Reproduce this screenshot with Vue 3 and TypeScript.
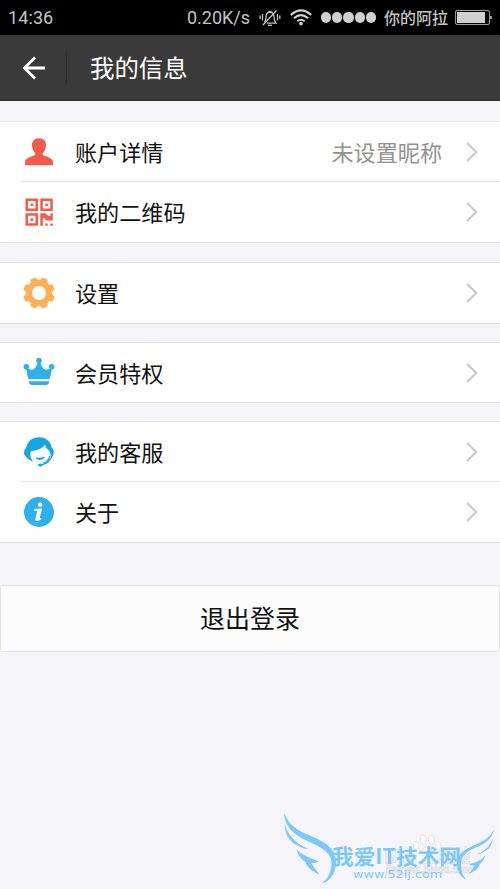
<script setup lang="ts">
type IconName = 'user' | 'qr' | 'gear' | 'crown' | 'service' | 'info'

interface Item {
  icon: IconName
  label: string
  value?: string
}

const groups: Item[][] = [
  [
    { icon: 'user', label: '账户详情', value: '未设置昵称' },
    { icon: 'qr', label: '我的二维码' },
  ],
  [{ icon: 'gear', label: '设置' }],
  [{ icon: 'crown', label: '会员特权' }],
  [
    { icon: 'service', label: '我的客服' },
    { icon: 'info', label: '关于' },
  ],
]

const teeth = [22.5, 67.5, 112.5, 157.5, 202.5, 247.5, 292.5, 337.5]
</script>

<template>
  <div class="screen">
    <div class="status">
      <span class="time">14:36</span>
      <span class="speed">0.20K/s</span>
      <svg class="bell" viewBox="0 0 22 18" fill="none" stroke="#c4c4c4" stroke-width="1.3">
        <path d="M5.5 13.5 Q7 11.500 7 8 Q7 3.500 11 3 Q15 3.500 15 8 Q15 11.500 17 14.200 H8" />
        <path d="M9.500 2.300 H12.500 M9 16.300 H13" />
        <path d="M4 16 L17.500 1.500" />
        <path d="M3.500 5 V11.500 M1.200 6.500 V10 M18.500 5 V11.500 M20.800 6.500 V10" />
      </svg>
      <svg class="wifi" viewBox="0 0 22 17" fill="none" stroke="#d0d0d0" stroke-width="2.100">
        <path d="M0.800 5.900 Q11 -3.300 21.200 5.900" />
        <path d="M4 9.200 Q11 3 18 9.200" />
        <path d="M7.300 12.300 Q11 9.200 14.700 12.300" />
        <circle cx="11" cy="14.600" r="1.900" fill="#d0d0d0" stroke="none" />
      </svg>
      <div class="signal"><i v-for="n in 5" :key="n"></i></div>
      <span class="carrier">你的阿拉</span>
      <div class="battery"><i></i></div>
    </div>

    <header class="header">
      <svg class="back" viewBox="0 0 24 24" fill="none" stroke="#fff" stroke-width="2.800">
        <path d="M13 1.500 L2.500 12 L13 22.500 M2.500 12 H23" />
      </svg>
      <span class="rule"></span>
      <h1>我的信息</h1>
    </header>

    <main>
      <section v-for="(group, g) in groups" :key="g" class="group">
        <div v-for="item in group" :key="item.label" class="row">
          <svg v-if="item.icon === 'user'" class="icon" viewBox="0 0 32 32" fill="#f25b4a">
            <path d="M16 2.200 C20.500 2.200 23.200 5 23 9.500 C22.900 12.500 21.800 15 20 17 C19.300 18.300 19.800 19.200 21.500 19.700 C26 21.300 29.500 22.500 30 26 V28.500 Q30 29.200 29.300 29.200 H2.700 Q2 29.200 2 28.500 V26 C2.500 22.500 6 21.300 10.500 19.700 C12.200 19.200 12.700 18.300 12 17 C10.200 15 9.100 12.500 9 9.500 C8.800 5 11.500 2.200 16 2.200 Z" />
          </svg>
          <svg v-else-if="item.icon === 'qr'" class="icon" viewBox="0 0 32 32" fill="#f25b4a">
            <path fill-rule="evenodd" d="M2.500 2.500h12.500v12.500h-12.500z M5 5v7.500h7.500v-7.500z M7.500 7.500h2.600v2.600h-2.600z M17.300 2.500h12.500v12.500h-12.500z M19.800 5v7.500h7.500v-7.500z M22.300 7.500h2.600v2.600h-2.600z M2.500 17.300h12.500v12.500h-12.500z M5 19.800v7.500h7.500v-7.500z M7.500 22.300h2.600v2.600h-2.600z" />
            <path d="M17.300 17.300h5.200l2.500 2.400h2.500v-2.400h2.300v7.200h-7.400v-2.300h-2.600v7.600h-2.500z M22.300 27.400h2.400v2.400h-2.400z M27.300 27.400h2.500v2.400h-2.500z" />
          </svg>
          <svg v-else-if="item.icon === 'gear'" class="icon" viewBox="0 0 32 32">
            <circle cx="16" cy="16" r="10" fill="none" stroke="#ffb057" stroke-width="5.900" />
            <path
              v-for="a in teeth"
              :key="a"
              d="M11.200 5 Q12.500 3.300 12.700 1.700 Q13 0.400 14 0.200 H18 Q19 0.400 19.300 1.700 Q19.500 3.300 20.800 5 Z"
              fill="#ffb057"
              :transform="`rotate(${a} 16 16)`"
            />
          </svg>
          <svg v-else-if="item.icon === 'crown'" class="icon" viewBox="0 0 32 32" fill="#2fb0e8">
            <circle cx="16" cy="3.500" r="2.800" />
            <circle cx="3.300" cy="9.700" r="2.800" />
            <circle cx="28.700" cy="9.700" r="2.800" />
            <path d="M2.800 10.500 Q7 13.200 10.300 12.500 Q14 10 14.600 4.500 H17.400 Q18 10 21.700 12.500 Q25 13.200 29.200 10.500 L26.800 21.900 H5.200 Z M5.700 24.200 H26.300 Q25.700 28 22.800 28 H9.200 Q6.300 28 5.700 24.200 Z" />
          </svg>
          <svg v-else-if="item.icon === 'service'" class="icon" viewBox="0 0 32 32">
            <path fill="#16a5e0" d="M1.300 18.500 C0.600 16 1.200 13.500 3 12 C4.500 5 9.500 1.300 16.300 1.300 C23 1.300 27.700 5.500 28.600 11.500 C31 13 31.500 17 29.800 20.200 L27.700 21 C27.800 18 27 15.500 24.500 13 C23 11.800 22.300 10.500 22 8.500 C19.500 13 13 14.500 8 15.200 C6.500 17.500 7 21.500 10.500 25.700 C6.500 24.500 3.500 22 1.300 18.500 Z" />
            <g fill="none" stroke="#16a5e0">
              <path stroke-width="1.200" d="M13.300 21.700 Q17 25.300 21.300 21.200 Q17.500 23.300 13.300 21.700 Z" />
              <path stroke-width="1.300" d="M29.500 17.500 Q27.500 27.500 18 29" />
              <path stroke-width="1.100" d="M26.900 20 Q25 26 20 27.200" />
            </g>
            <ellipse cx="17.300" cy="29" rx="2.300" ry="1.600" fill="#16a5e0" />
          </svg>
          <svg v-else class="icon" viewBox="0 0 32 32">
            <circle cx="16" cy="16" r="15" fill="#2fb0e8" />
            <circle cx="17.200" cy="8.700" r="2.200" fill="#fff" />
            <path fill="#fff" d="M11.400 13 L18.400 12.400 Q19 12.500 18.800 13.500 L16.700 21.500 Q16.500 23 18.900 22.200 Q17 25 14.300 25 Q12 24.700 12.400 22.300 L14.200 15.500 Q14 14.600 11.200 14.700 Z" />
          </svg>
          <div class="cell">
            <span class="label">{{ item.label }}</span>
            <span v-if="item.value" class="value">{{ item.value }}</span>
            <svg class="chevron" viewBox="0 0 12 20" fill="none" stroke="#c8c8c8" stroke-width="2">
              <path d="M1 1 L10.300 10 L1 19" />
            </svg>
          </div>
        </div>
      </section>
      <button class="logout" type="button">退出登录</button>
    </main>

    <svg class="mark" viewBox="0 0 690 267">
      <g fill="#fafafc" stroke="#dedee3" stroke-width="2.500">
        <ellipse cx="438" cy="137" rx="9" ry="12" />
        <ellipse cx="460" cy="119" rx="9" ry="13" />
        <ellipse cx="484" cy="119" rx="9" ry="13" />
        <ellipse cx="504" cy="137" rx="9" ry="12" />
        <path d="M470 142 C485 142 488 156 500 166 C510 180 500 194 484 190 H456 C440 194 432 180 442 166 C452 156 455 142 470 142 Z" />
        <text x="342" y="190" textLength="88" lengthAdjust="spacingAndGlyphs" class="ghost big">Bai</text>
        <text x="507" y="187" textLength="94" lengthAdjust="spacingAndGlyphs" class="ghost big">经验</text>
        <text x="348" y="220" textLength="258" lengthAdjust="spacingAndGlyphs" class="ghost small">jingyan.baidu.com</text>
      </g>
      <g fill="#7cc8fb">
        <path d="M42 38 C57 76 82 91 120 107 C160 122 195 143 198 181 C199 214 183 244 157 250 C177 231 187 211 184 184 C181 153 145 138 112 123 C70 104 43 77 42 38 Z" />
        <path d="M44 72 C54 106 78 132 116 147 C76 143 43 115 44 72 Z" />
        <path d="M79 148 C94 164 119 174 147 184 C139 190 131 190 123 188 C130 199 139 211 149 224 C129 215 109 202 107 187 C95 179 84 167 79 148 Z" />
        <path d="M672 89 C665 119 642 132 614 144 C586 157 573 169 573 190 C572 212 579 229 589 239 C569 230 560 211 562 186 C564 161 583 149 609 137 C636 125 656 116 672 89 Z" />
        <path d="M669 116 C665 143 648 158 620 163 C644 153 659 140 669 116 Z" />
        <path d="M646 166 C641 185 630 190 627 197 C622 210 610 216 597 220 C606 211 611 203 614 196 C607 198 602 196 597 192 C616 189 635 182 646 166 Z" />
        <text x="186" y="191" textLength="387" lengthAdjust="spacingAndGlyphs" class="brand">我爱IT技术网</text>
        <text x="249" y="234" textLength="268" lengthAdjust="spacingAndGlyphs" class="site">www.52ij.com</text>
      </g>
    </svg>
  </div>
</template>

<style>
body {
  background: #f4f4f9;
}
</style>

<style scoped>
.screen {
  position: relative;
  width: 500px;
  height: 889px;
  overflow: hidden;
  background: #f4f4f9;
  font-family: Roboto, 'Noto Sans CJK SC', sans-serif;
}
.status {
  display: flex;
  align-items: center;
  box-sizing: border-box;
  height: 35px;
  padding: 0 7px 0 8px;
  background: #000;
  color: #c4c4c4;
  font-size: 18px;
}
.time {
  letter-spacing: 0.1px;
}
.speed {
  margin-left: auto;
}
.bell {
  width: 22px;
  height: 18px;
  margin-left: 9px;
}
.wifi {
  width: 22px;
  height: 17px;
  margin-left: 9px;
}
.signal {
  display: flex;
  gap: 1px;
  margin-left: 9px;
}
.signal i {
  width: 10.200px;
  height: 10.200px;
  border-radius: 50%;
  background: #d0d0d0;
}
.carrier {
  margin-left: 8px;
  padding-bottom: 2px;
  font-size: 16px;
  font-weight: 500;
}
.battery {
  position: relative;
  box-sizing: border-box;
  width: 35px;
  height: 15px;
  margin: 0 3px 0 7px;
  padding: 1px;
  border: 1px solid #999;
  border-radius: 2px;
}
.battery i {
  display: block;
  width: 28px;
  height: 11px;
  background: #d0d0d0;
}
.battery::after {
  content: '';
  position: absolute;
  top: 5px;
  right: -3px;
  width: 2px;
  height: 3px;
  background: #999;
}
.header {
  display: flex;
  align-items: center;
  box-sizing: border-box;
  height: 66px;
  padding-left: 22px;
  border-bottom: 1px solid #2f2f2f;
  background: #3a3a3a;
}
.back {
  width: 24px;
  height: 24px;
}
.rule {
  width: 1px;
  height: 33px;
  margin: 0 23px 0 20px;
  background: #303030;
}
h1 {
  margin: 0;
  padding-top: 2px;
  color: #fff;
  font-size: 24.400px;
  font-weight: 400;
  line-height: 36px;
}
main {
  display: flex;
  flex-direction: column;
  padding-top: 20px;
}
.group {
  margin-bottom: 18px;
  border-top: 1px solid #e6e6e8;
  border-bottom: 1px solid #e2e2e5;
  background: #fff;
}
.group:first-child {
  margin-bottom: 19px;
}
.row {
  display: flex;
  align-items: center;
  box-sizing: border-box;
  height: 59px;
  padding-left: 23px;
}
.group:nth-child(2) .row {
  height: 60px;
}
.row + .row {
  height: 61px;
  padding-top: 1px;
  background: linear-gradient(#e4e4e6, #e4e4e6) 22px 0 / 100% 1px no-repeat;
}
.icon {
  flex: none;
  width: 32px;
  height: 32px;
}
.cell {
  display: flex;
  align-items: center;
  flex: 1;
  box-sizing: border-box;
  height: 100%;
  margin-left: 20px;
  padding-right: 22px;
}
.label {
  flex: 1;
  padding-top: 2px;
  color: #111;
  font-size: 22.100px;
  line-height: 32px;
}
.value {
  margin-right: 24px;
  padding-top: 2px;
  color: #929292;
  font-size: 22.100px;
  line-height: 32px;
}
.chevron {
  width: 12px;
  height: 20px;
}
.logout {
  box-sizing: border-box;
  width: 100%;
  height: 67px;
  margin-top: 24px;
  padding: 0 0 3px;
  border: 1px solid #e4e4e6;
  border-radius: 3px;
  background: #fcfcfc;
  color: #111;
  font-family: inherit;
  font-size: 25px;
}
.mark {
  position: absolute;
  left: 270px;
  top: 800px;
  width: 230px;
  height: 89px;
}
.brand {
  font-family: 'Noto Sans CJK SC', sans-serif;
  font-size: 63px;
  font-weight: 700;
}
.site {
  font-family: 'DejaVu Sans', sans-serif;
  font-size: 34px;
}
.ghost {
  font-family: 'Noto Sans CJK SC', sans-serif;
  font-weight: 700;
}
.ghost.big {
  font-size: 50px;
}
.ghost.small {
  font-size: 28px;
}
</style>
